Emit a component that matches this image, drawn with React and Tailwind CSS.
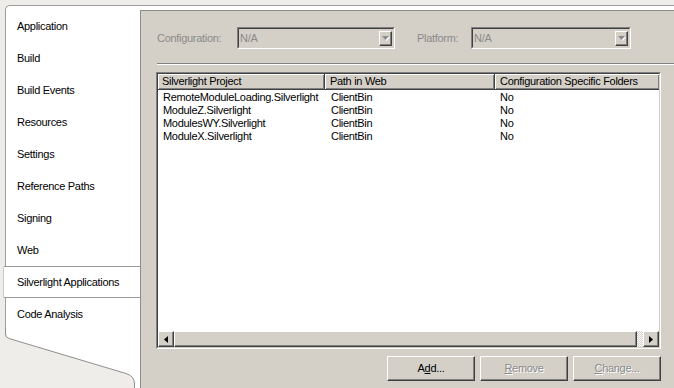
import React from 'react';

const tabs = [
  'Application',
  'Build',
  'Build Events',
  'Resources',
  'Settings',
  'Reference Paths',
  'Signing',
  'Web',
  'Silverlight Applications',
  'Code Analysis',
];

const projects = [
  ['RemoteModuleLoading.Silverlight', 'ClientBin', 'No'],
  ['ModuleZ.Silverlight', 'ClientBin', 'No'],
  ['ModulesWY.Silverlight', 'ClientBin', 'No'],
  ['ModuleX.Silverlight', 'ClientBin', 'No'],
];

const raised =
  'border border-t-white border-l-white border-r-[#404040] border-b-[#404040] shadow-[inset_-1px_-1px_#808080] bg-[#d4d0c8]';

function Arrow({ dir, color = '#000' }) {
  // tiny classic triangles
  const pts = {
    down: '0,0 7,0 3.5,4',
    left: '4,0 4,7 0,3.5',
    right: '0,0 0,7 4,3.5',
  }[dir];
  const w = dir === 'down' ? 7 : 4;
  const h = dir === 'down' ? 4 : 7;
  return (
    <svg width={w} height={h} viewBox={`0 0 ${w} ${h}`}>
      <polygon points={pts} fill={color} />
    </svg>
  );
}

function Combo({ width }) {
  return (
    <div className={`${width} h-[22px] border border-t-[#808080] border-l-[#808080] border-r-white border-b-white`}>
      <div className="h-full flex items-center justify-between border border-t-[#404040] border-l-[#404040] border-r-[#d4d0c8] border-b-[#d4d0c8] pl-[1px] pr-[1px]">
        <span className="text-[#8a8a8a]">N/A</span>
        <div className={`${raised} w-[13px] h-[15px] flex items-center justify-center`}>
          <span className="drop-shadow-[1px_1px_0_#fff]">
            <Arrow dir="down" color="#8a8a8a" />
          </span>
        </div>
      </div>
    </div>
  );
}

function PushButton({ children, disabled }) {
  return (
    <div
      className={`${raised} w-[88px] h-[25px] flex items-center justify-center ${
        disabled ? 'text-[#8a8a8a] [text-shadow:1px_1px_0_#fff]' : 'text-black'
      }`}
    >
      {children}
    </div>
  );
}

export default function App() {
  return (
    <div className="relative w-[674px] h-[388px] overflow-hidden bg-[#eeede9] pt-[5px] pl-[5px] font-['Liberation_Sans',Arial,sans-serif] text-[11px] tracking-[-0.3px] leading-none text-black">
      <div className="flex h-full bg-white border-t border-l border-[#9d9d9d] rounded-tl-[5px]">
        {/* tab list */}
        <div className="w-[134px] shrink-0 pt-[4px]">
          {tabs.map((t) =>
            t === 'Silverlight Applications' ? (
              <div
                key={t}
                className="relative -ml-[3px] h-[32px] flex items-center pl-[13px] bg-white border-y border-l border-t-[#9a9a9a] border-b-[#9a9a9a] border-l-[#c8c8c8] rounded-l-[2px]"
              >
                {t}
              </div>
            ) : (
              <div key={t} className="h-[32px] flex items-center pl-[11px]">
                {t}
              </div>
            )
          )}
        </div>

        {/* page panel */}
        <div className="flex-1 mt-[4px] bg-[#d4d0c8] border-t border-l border-[#8c8c8c] flex flex-col">
          <div className="flex items-center mt-[16px] pl-[16px]">
            <span className="w-[80px] text-[#8a8a8a]">Configuration:</span>
            <Combo width="w-[158px]" />
            <span className="ml-[22px] w-[54px] text-[#8a8a8a]">Platform:</span>
            <Combo width="w-[160px]" />
          </div>

          <div className="ml-[16px] mt-[14px] border-t border-b border-t-[#808080] border-b-white" />

          <div className="ml-[15px] mt-[7px] w-[505px] h-[277px] border border-t-[#808080] border-l-[#808080] border-r-white border-b-white">
            <div className="h-full flex flex-col bg-white border border-t-[#404040] border-l-[#404040] border-r-[#d4d0c8] border-b-[#d4d0c8]">
              <div className="flex h-[16px] shrink-0">
                <div className="w-[167px] flex items-center pl-[4px] bg-[#d4d0c8] border-r border-b border-[#404040] shadow-[inset_1px_1px_#fff,inset_-1px_-1px_#808080]">
                  Silverlight Project
                </div>
                <div className="w-[170px] flex items-center pl-[5px] bg-[#d4d0c8] border-r border-b border-[#404040] shadow-[inset_1px_1px_#fff,inset_-1px_-1px_#808080]">
                  Path in Web
                </div>
                <div className="flex-1 flex items-center pl-[5px] bg-[#d4d0c8] border-b border-[#404040] shadow-[inset_1px_1px_#fff,inset_-1px_-1px_#808080]">
                  Configuration Specific Folders
                </div>
              </div>

              <div className="flex-1 pt-[1px]">
                {projects.map(([name, path, cfg]) => (
                  <div key={name} className="flex h-[13px] items-center">
                    <div className="w-[167px] pl-[5px]">{name}</div>
                    <div className="w-[170px] pl-[6px]">{path}</div>
                    <div className="flex-1 pl-[5px]">{cfg}</div>
                  </div>
                ))}
              </div>

              {/* horizontal scrollbar */}
              <div className="flex h-[16px] shrink-0">
                <div className={`${raised} w-[16px] flex items-center justify-center`}>
                  <Arrow dir="left" />
                </div>
                <div className={`${raised} flex-1`} />
                <div className="w-[6px] bg-[repeating-conic-gradient(#fff_0%_25%,#d4d0c8_0%_50%)] bg-[length:2px_2px]" />
                <div className={`${raised} w-[16px] flex items-center justify-center`}>
                  <Arrow dir="right" />
                </div>
              </div>
            </div>
          </div>

          <div className="flex justify-end gap-[5px] mt-[7px] mr-[13px]">
            <PushButton>
              A<span className="underline">d</span>d...
            </PushButton>
            <PushButton disabled>
              <span className="underline">R</span>emove
            </PushButton>
            <PushButton disabled>
              <span className="underline">C</span>hange...
            </PushButton>
          </div>
        </div>
      </div>

      {/* dog-eared bottom of the tab strip */}
      <svg className="absolute left-0 bottom-0" width="141" height="60" viewBox="0 0 141 60">
        <path
          d="M0 0 H5.5 V6 Q5.5 9.5 9 10.5 L126 45.5 Q134.5 48 134.5 56 V60 H0 Z"
          fill="#eeede9"
        />
        <path
          d="M5.5 0 V6 Q5.5 9.5 9 10.5 L126 45.5 Q134.5 48 134.5 56 V60"
          fill="none"
          stroke="#8f8f8f"
          strokeWidth="1"
        />
      </svg>
    </div>
  );
}
